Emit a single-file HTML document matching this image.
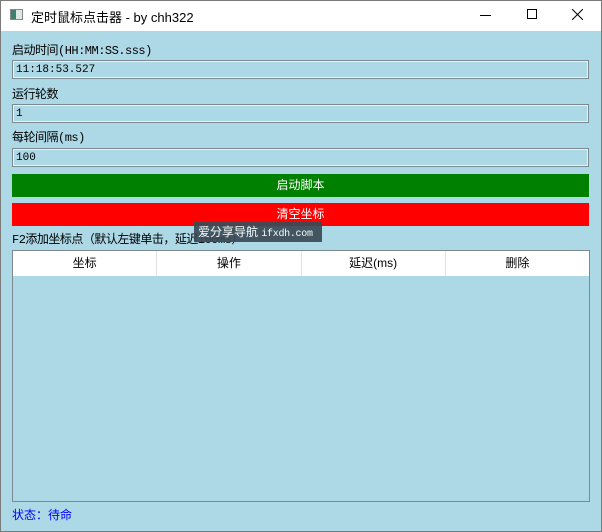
<!DOCTYPE html>
<html><head><meta charset="utf-8"><style>
*{margin:0;padding:0;box-sizing:border-box}
body{width:602px;height:532px;overflow:hidden;background:#add8e6;font-family:"Liberation Sans","Noto Sans CJK SC",sans-serif;font-size:12px;position:relative;color:#000}
.abs{position:absolute;white-space:nowrap}
.frame{position:absolute;left:0;top:0;width:602px;height:532px;border:1px solid #7a7a7a;pointer-events:none}
.title{left:0;top:0;width:602px;height:31px;background:#fff}
.lbl{left:12px;font-size:12px;font-family:"Liberation Mono","Noto Sans CJK SC",monospace;letter-spacing:-0.5px}
.inp{left:12px;width:577px;height:19px;border:1px solid #7c8a90;box-shadow:inset 0 0 0 1px #e8f2f5;background:#add8e6;padding:2px 3px;font-family:"Liberation Mono","Noto Sans CJK SC",monospace;font-size:11px;line-height:14px}
.btn{left:12px;width:577px;height:23px;color:#fff;text-align:center;line-height:23px;font-size:12px}
</style></head><body>
<div class="abs title"></div>
<div class="abs" style="left:10px;top:9px;width:13px;height:11px;border:1px solid #888;background:#dfe7e5"><div style="width:5px;height:9px;background:#3e8070"></div></div>
<div class="abs" style="left:31px;top:7px;font-size:13px">定时鼠标点击器 - by chh322</div>
<div class="abs" style="left:480px;top:15px;width:11px;height:1px;background:#000"></div>
<div class="abs" style="left:527px;top:9px;width:10px;height:10px;border:1px solid #000"></div>
<svg class="abs" style="left:572px;top:9px" width="11" height="11"><path d="M0 0L11 11M11 0L0 11" stroke="#000" stroke-width="1"/></svg>

<div class="abs lbl" style="top:41px">启动时间(HH:MM:SS.sss)</div>
<div class="abs inp" style="top:60px">11:18:53.527</div>
<div class="abs lbl" style="top:85px">运行轮数</div>
<div class="abs inp" style="top:104px">1</div>
<div class="abs lbl" style="top:128px">每轮间隔(ms)</div>
<div class="abs inp" style="top:148px">100</div>
<div class="abs btn" style="top:174px;background:#008000">启动脚本</div>
<div class="abs btn" style="top:203px;background:#ff0000">清空坐标</div>
<div class="abs lbl" style="top:230px">F2添加坐标点（默认左键单击，延迟100ms）</div>
<div class="abs" style="left:194px;top:222px;width:128px;height:20px;background:#3a4a55;opacity:.92;color:#fff;font-size:12px;line-height:20px;padding-left:4px;overflow:hidden">爱分享导航 <span style="font-family:'Liberation Mono',monospace;font-size:10px;letter-spacing:-0.3px">ifxdh.com</span></div>
<div class="abs" style="left:12px;top:250px;width:578px;height:252px;border:1px solid #7c8a90">
<div style="display:flex;height:25px;background:#fff">
<div style="flex:1;text-align:center;line-height:25px;border-right:1px solid #e2e2e2">坐标</div>
<div style="flex:1;text-align:center;line-height:25px;border-right:1px solid #e2e2e2">操作</div>
<div style="flex:1;text-align:center;line-height:25px;border-right:1px solid #e2e2e2">延迟(ms)</div>
<div style="flex:1;text-align:center;line-height:25px">删除</div>
</div></div>
<div class="abs" style="left:12px;top:506px;color:#0000ff;font-size:12px">状态：待命</div>
<div class="frame"></div>
</body></html>
